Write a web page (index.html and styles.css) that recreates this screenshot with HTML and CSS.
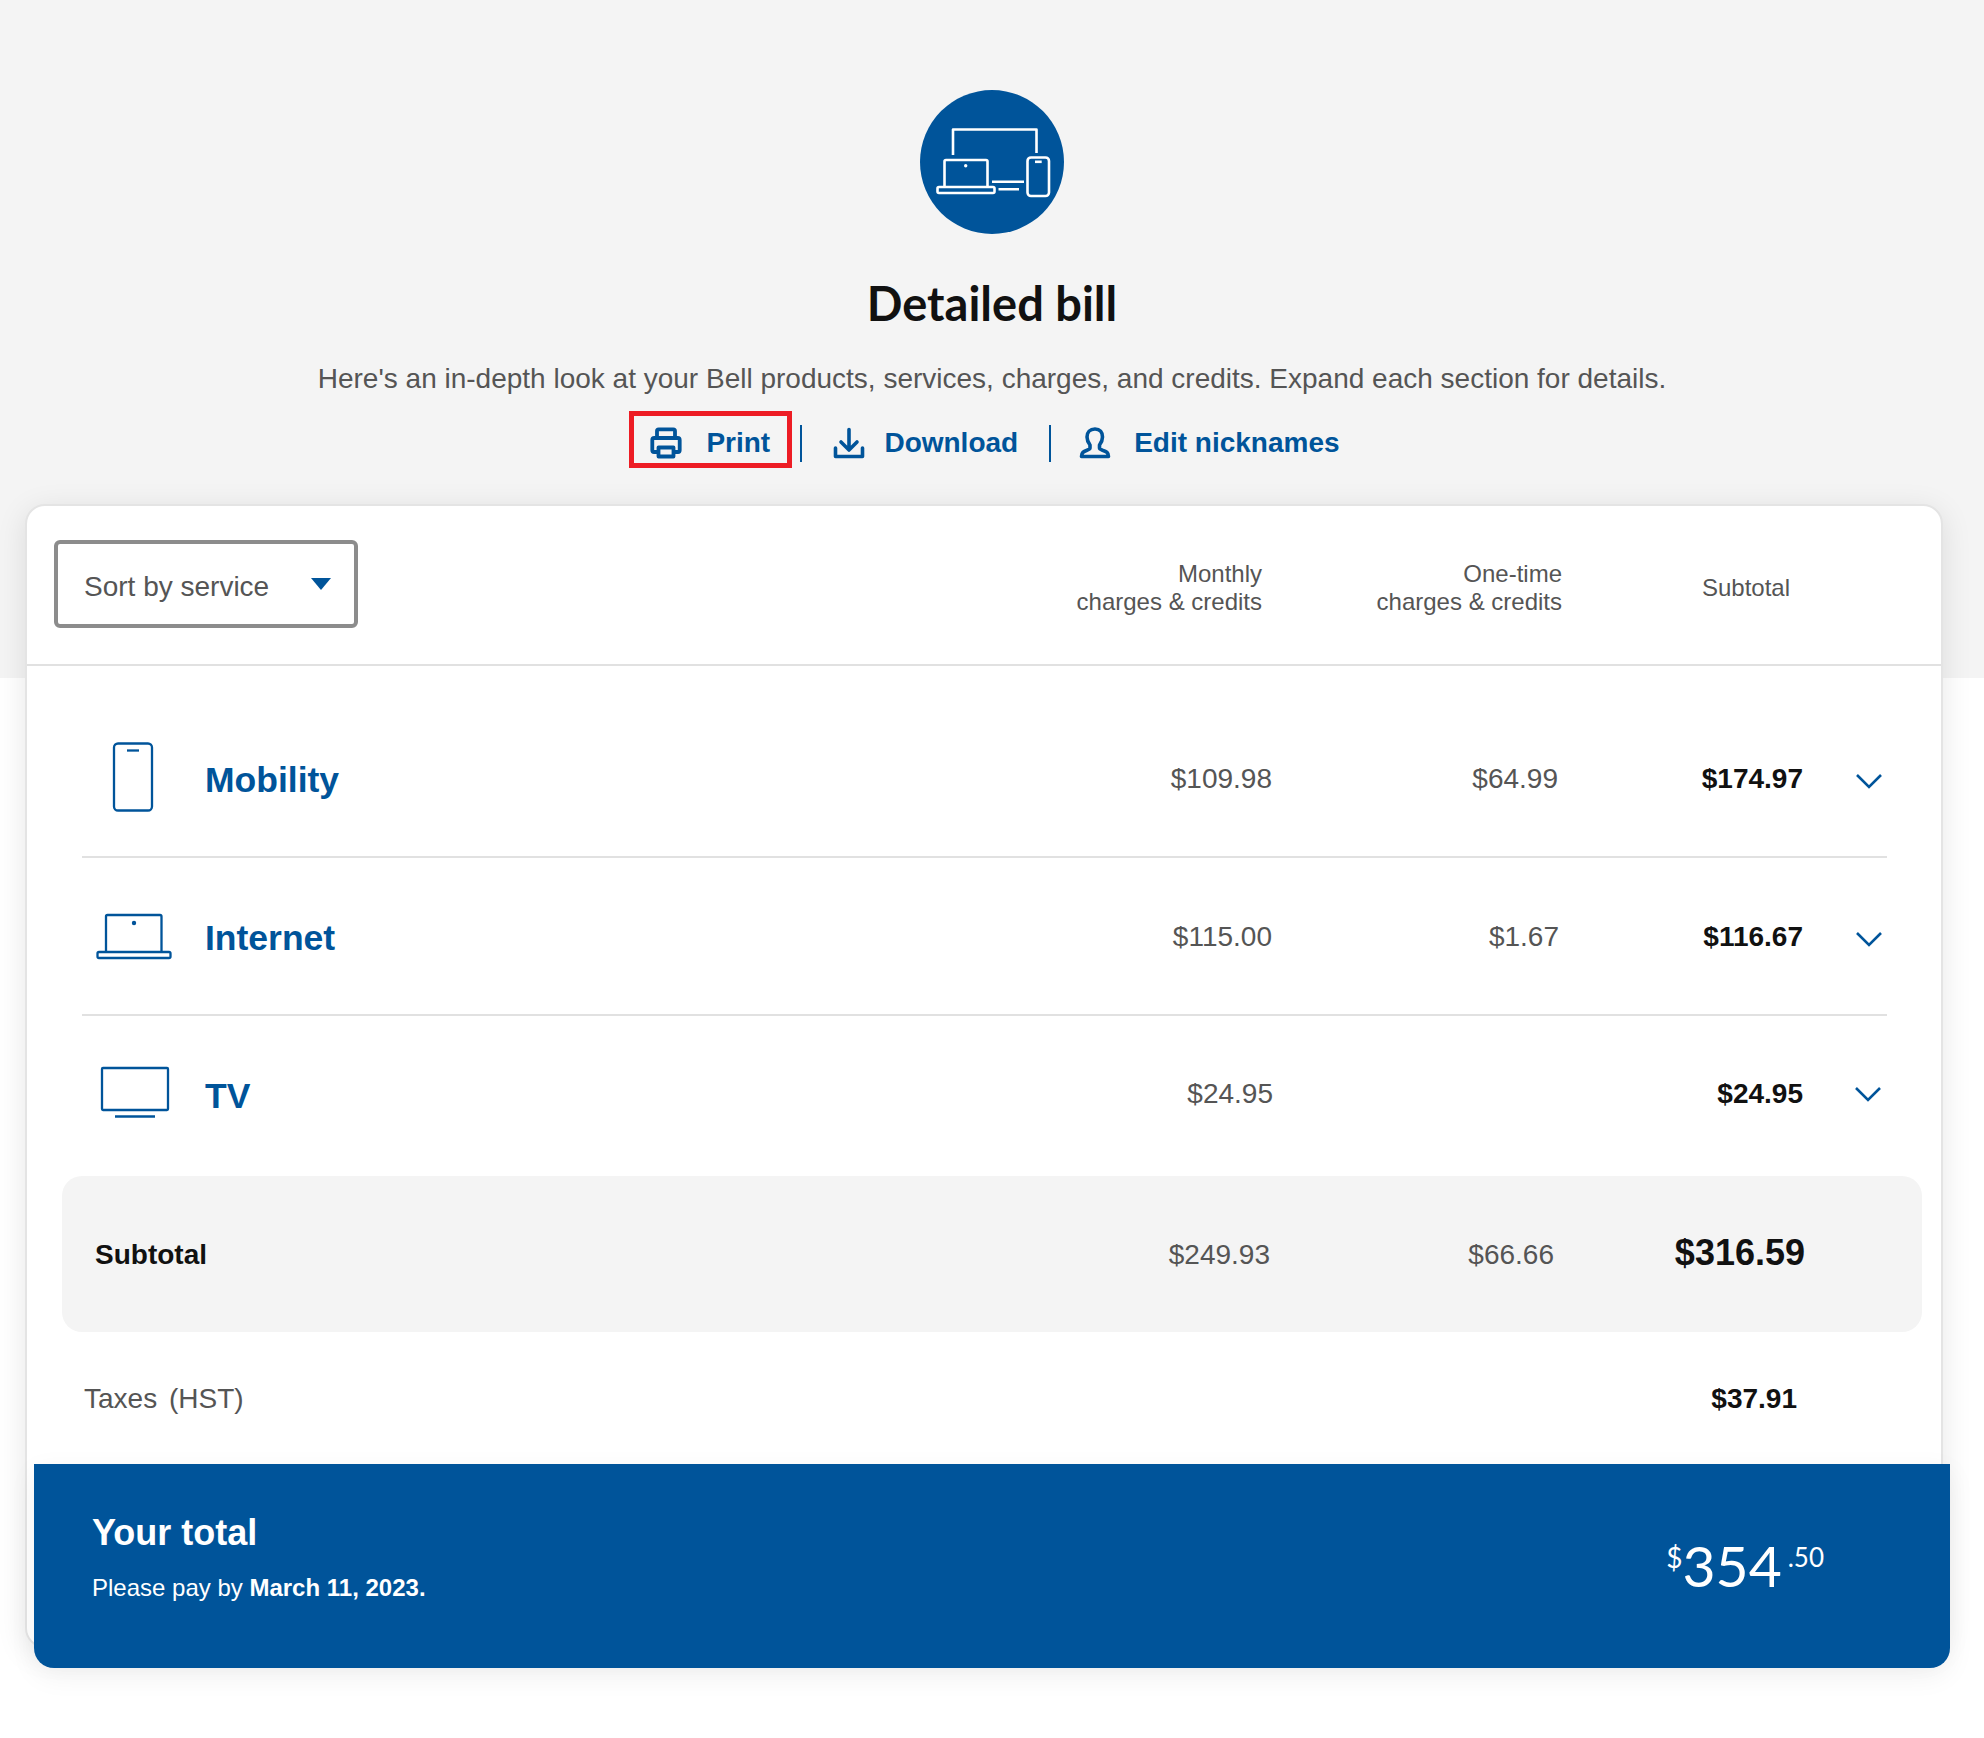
FILE: index.html
```html
<!DOCTYPE html>
<html lang="en">
<head>
<meta charset="utf-8">
<title>Detailed bill</title>
<link rel="stylesheet" href="styles.css">
</head>
<body>
<header class="hero">
  <svg class="hero-icon" viewBox="0 0 144 144" aria-hidden="true">
    <circle cx="72" cy="72" r="72" fill="#00549a"/>
    <g fill="none" stroke="#fff" stroke-width="2.6" stroke-linejoin="round">
      <path d="M33 65V39.5H116.5V63"/>
      <path d="M24.5 96.5V71.5q0-1.500 1.500-1.500H66q1.500 0 1.500 1.500V96.5"/>
      <rect x="17.5" y="97" width="57" height="6" rx="1.5"/>
      <path d="M72 91.7H104M78.5 99.3H99"/>
      <rect x="107.5" y="67.5" width="21.5" height="38.5" rx="3.5"/>
      <path d="M115 71.8H121.7"/>
    </g>
    <circle cx="45.7" cy="75.7" r="1.7" fill="#fff"/>
  </svg>
  <h1 class="title">Detailed bill</h1>
  <p class="intro">Here's an in-depth look at your Bell products, services, charges, and credits. Expand each section for details.</p>
  <nav class="actions">
    <a class="action action-print">
      <svg class="action-icon" viewBox="0 0 32 32" aria-hidden="true">
        <g fill="none" stroke="#00549a" stroke-width="3.800" stroke-linejoin="round" stroke-linecap="round">
          <path d="M7 10.500V4q0-1.700 1.700-1.700h14.600Q25 2.300 25 4v6.500"/>
          <path d="M7 25H4q-1.700 0-1.700-1.700V13q0-2 2-2h23.400q2 0 2 2v10.300q0 1.700-1.700 1.700H25"/>
          <path d="M8.500 20.500h15v9h-15z"/>
        </g>
      </svg>
      <span>Print</span>
    </a>
    <span class="divider divider-first"></span>
    <a class="action action-download">
      <svg class="action-icon" viewBox="0 0 32 32" aria-hidden="true">
        <g fill="none" stroke="#00549a" stroke-width="3.600" stroke-linejoin="round" stroke-linecap="round">
          <path d="M2.500 21v8.500h27V21"/>
          <path d="M16 2.500v20M8 15l8 8 8-8"/>
        </g>
      </svg>
      <span>Download</span>
    </a>
    <span class="divider divider-second"></span>
    <a class="action action-edit">
      <svg class="action-icon" viewBox="0 0 32 32" aria-hidden="true">
        <path fill="none" stroke="#00549a" stroke-width="3.600" stroke-linejoin="round" d="M16 2c-5 0-8 3.500-8 8 0 3.500 1.500 6 3 8v3c0 1-1 1.500-3 2.200C4.500 24.500 2.500 25.500 2.500 29.500h27c0-4-2-5-6-6.300-2-.7-3-1.200-3-2.200v-3c1.500-2 3-4.500 3-8C23.500 5 21 2 16 2z"/>
      </svg>
      <span>Edit nicknames</span>
    </a>
  </nav>
</header>

<main class="card">
  <div class="card-head">
    <div class="select">
      <span>Sort by service</span>
      <svg class="select-arrow" viewBox="0 0 20 12" aria-hidden="true"><path d="M0 0H20L10 12z" fill="#00549a"/></svg>
    </div>
    <div class="head-label head-monthly">Monthly<br>charges &amp; credits</div>
    <div class="head-label head-once">One-time<br>charges &amp; credits</div>
    <div class="head-label head-sub">Subtotal</div>
  </div>

  <div class="services">
    <section class="service">
      <div class="service-icon">
        <svg viewBox="0 0 80 80" width="80" height="80" aria-hidden="true">
          <g fill="none" stroke="#00549a" stroke-width="2.300">
            <rect x="21" y="4.500" width="38" height="67" rx="4"/>
            <path d="M34 11.500H46"/>
          </g>
        </svg>
      </div>
      <div class="service-name">Mobility</div>
      <div class="amount">$109.98</div>
      <div class="amount">$64.99</div>
      <div class="amount amount-strong">$174.97</div>
      <svg class="chevron" viewBox="0 0 26 15" aria-hidden="true"><path d="M1 1l12 12L25 1" fill="none" stroke="#00549a" stroke-width="2.600"/></svg>
    </section>
    <section class="service">
      <div class="service-icon">
        <svg viewBox="0 0 80 80" width="80" height="80" aria-hidden="true">
          <g fill="none" stroke="#00549a" stroke-width="2.300">
            <path d="M13 55V19.500q0-1.500 1.500-1.500H67q1.500 0 1.500 1.500V55"/>
            <rect x="4.500" y="55" width="73" height="6" rx="1.500"/>
          </g>
          <circle cx="41" cy="26" r="2.200" fill="#00549a"/>
        </svg>
      </div>
      <div class="service-name">Internet</div>
      <div class="amount">$115.00</div>
      <div class="amount amount-shift">$1.67</div>
      <div class="amount amount-strong">$116.67</div>
      <svg class="chevron" viewBox="0 0 26 15" aria-hidden="true"><path d="M1 1l12 12L25 1" fill="none" stroke="#00549a" stroke-width="2.600"/></svg>
    </section>
    <section class="service service-last">
      <div class="service-icon">
        <svg viewBox="0 0 80 80" width="80" height="80" aria-hidden="true">
          <g fill="none" stroke="#00549a" stroke-width="2.300">
            <rect x="9" y="14" width="66" height="42" rx="1"/>
            <path d="M22 62.500H62"/>
          </g>
        </svg>
      </div>
      <div class="service-name service-name-tv">TV</div>
      <div class="amount amount-tv">$24.95</div>
      <div class="amount"></div>
      <div class="amount amount-strong">$24.95</div>
      <svg class="chevron chevron-tv" viewBox="0 0 26 15" aria-hidden="true"><path d="M1 1l12 12L25 1" fill="none" stroke="#00549a" stroke-width="2.600"/></svg>
    </section>
  </div>

  <div class="subtotal">
    <div class="subtotal-label">Subtotal</div>
    <div class="subtotal-monthly">$249.93</div>
    <div class="subtotal-once">$66.66</div>
    <div class="subtotal-total">$316.59</div>
  </div>

  <div class="taxes">
    <div class="taxes-label">Taxes (HST)</div>
    <div class="taxes-amount">$37.91</div>
  </div>

  <div class="total">
    <div class="total-info">
      <div class="total-title">Your total</div>
      <div class="total-due">Please pay by <strong>March 11, 2023.</strong></div>
    </div>
    <div class="total-price">
      <span class="price-small">$</span><span class="price-main">354</span><span class="price-small price-cents">.50</span>
    </div>
  </div>
</main>
</body>
</html>
```

FILE: styles.css
```css
* { box-sizing: border-box; }

html, body { margin: 0; padding: 0; }

body {
  min-height: 1738px;
  background: linear-gradient(#f4f4f4 678px, #fff 678px);
  font-family: "Liberation Sans", Arial, sans-serif;
  color: #555;
}

.hero {
  display: flex;
  flex-direction: column;
  align-items: center;
  padding-top: 90px;
}

.hero-icon { width: 144px; height: 144px; display: block; }

.title {
  margin: 41px 0 0;
  font-family: Lato, "Liberation Sans", sans-serif;
  font-size: 47px;
  line-height: 56px;
  font-weight: 700;
  color: #111;
}

.intro {
  margin: 32px 0 0;
  font-size: 28px;
  line-height: 32px;
}

.actions {
  display: flex;
  align-items: center;
  margin-top: 16px;
  height: 57px;
  margin-right: 15px;
  font-size: 28px;
  font-weight: 700;
  color: #00549a;
}

.action { display: flex; align-items: center; margin-top: 7px; }

.action-icon { width: 32px; height: 32px; display: block; }

.action-print {
  width: 163px;
  height: 57px;
  margin-top: 0;
  padding: 7px 0 0 16px;
  border: 5px solid #ed1c24;
  gap: 24px;
}

.action-download { gap: 19px; }
.action-edit { gap: 23px; }

.divider {
  width: 2px;
  height: 37px;
  margin: 7px 31px 0 8px;
  background: #00549a;
}

.divider-second { margin-left: 31px; margin-right: 28px; }

.card {
  position: relative;
  margin: 36px 41px 0 25px;
  height: 1144px;
  background: #fff;
  border: 2px solid #e4e4e4;
  border-radius: 20px;
  box-shadow: 0 6px 30px rgba(0, 0, 0, .1);
}

.card-head {
  display: flex;
  align-items: center;
  height: 160px;
  border-bottom: 2px solid #e1e1e1;
  padding: 0 0 0 27px;
  font-size: 24px;
}

.select {
  display: flex;
  align-items: center;
  justify-content: space-between;
  width: 304px;
  height: 88px;
  margin-top: -2px;
  padding: 6px 23px 0 26px;
  border: 4px solid #8c8c8c;
  border-radius: 6px;
  font-size: 28px;
}

.select-arrow { width: 20px; height: 12px; margin-top: -6px; }

.head-label {
  text-align: right;
  line-height: 28px;
  flex: none;
  margin-top: 6px;
}

.head-monthly { width: 904px; }
.head-once { width: 300px; }
.head-sub { width: 228px; }

.services { padding: 34px 54px 2px 55px; }

.service {
  display: grid;
  grid-template-columns: 123px 1fr 150px 286px 245px 84px;
  align-items: center;
  height: 158px;
  padding-top: 2px;
  border-bottom: 2px solid #e1e1e1;
}

.service-last { border-bottom: 0; padding: 0 0 2px; }

.service-icon { display: flex; padding-left: 11px; }

.service-name {
  margin-top: 2px;
  font-size: 35.5px;
  font-weight: 700;
  color: #00549a;
}

.service-name-tv { margin-top: 4px; }

.amount {
  text-align: right;
  font-size: 28px;
}

.amount-tv { margin-right: -1px; }

.amount-shift { margin-right: -1px; }

.amount-strong { font-weight: 700; color: #111; }

.chevron { width: 26px; height: 15px; justify-self: end; margin-right: 5px; margin-top: 4px; }

.chevron-tv { margin-right: 6px; margin-top: 0; }

.subtotal {
  display: flex;
  align-items: center;
  height: 156px;
  margin: 0 19px 0 35px;
  padding: 2px 0 0 33px;
  background: #f4f4f4;
  border-radius: 20px;
  font-size: 28px;
}

.subtotal-label { flex: 1; font-weight: 700; color: #111; }
.subtotal-monthly { width: 200px; text-align: right; }
.subtotal-once { width: 284px; text-align: right; }
.subtotal-total { width: 251px; text-align: right; margin-right: 117px; margin-top: -4px; font-size: 36px; font-weight: 700; color: #111; }

.taxes {
  display: flex;
  align-items: center;
  justify-content: space-between;
  height: 132px;
  padding: 2px 144px 0 57px;
  font-size: 28px;
  word-spacing: 4px;
}

.taxes-amount { font-weight: 700; color: #111; }

.total {
  display: flex;
  align-items: center;
  justify-content: space-between;
  height: 204px;
  margin: 0 -9px 0 7px;
  padding: 0 126px 18px 58px;
  background: #00549a;
  border-radius: 0 0 20px 20px;
  box-shadow: 0 8px 28px rgba(0, 0, 0, .06);
  color: #fff;
}

.total-title { font-size: 36px; font-weight: 700; line-height: 44px; }

.total-due { margin-top: 18px; font-size: 24px; line-height: 30px; }

.total-price { display: flex; align-items: flex-start; margin-top: 18px; font-family: Lato, "Liberation Sans", sans-serif; }

.price-small { font-size: 28px; line-height: 34px; margin-top: 8px; }

.price-cents { font-size: 26px; }

.price-main { font-size: 57px; line-height: 70px; margin: -2px 6px 0 0; }
```
